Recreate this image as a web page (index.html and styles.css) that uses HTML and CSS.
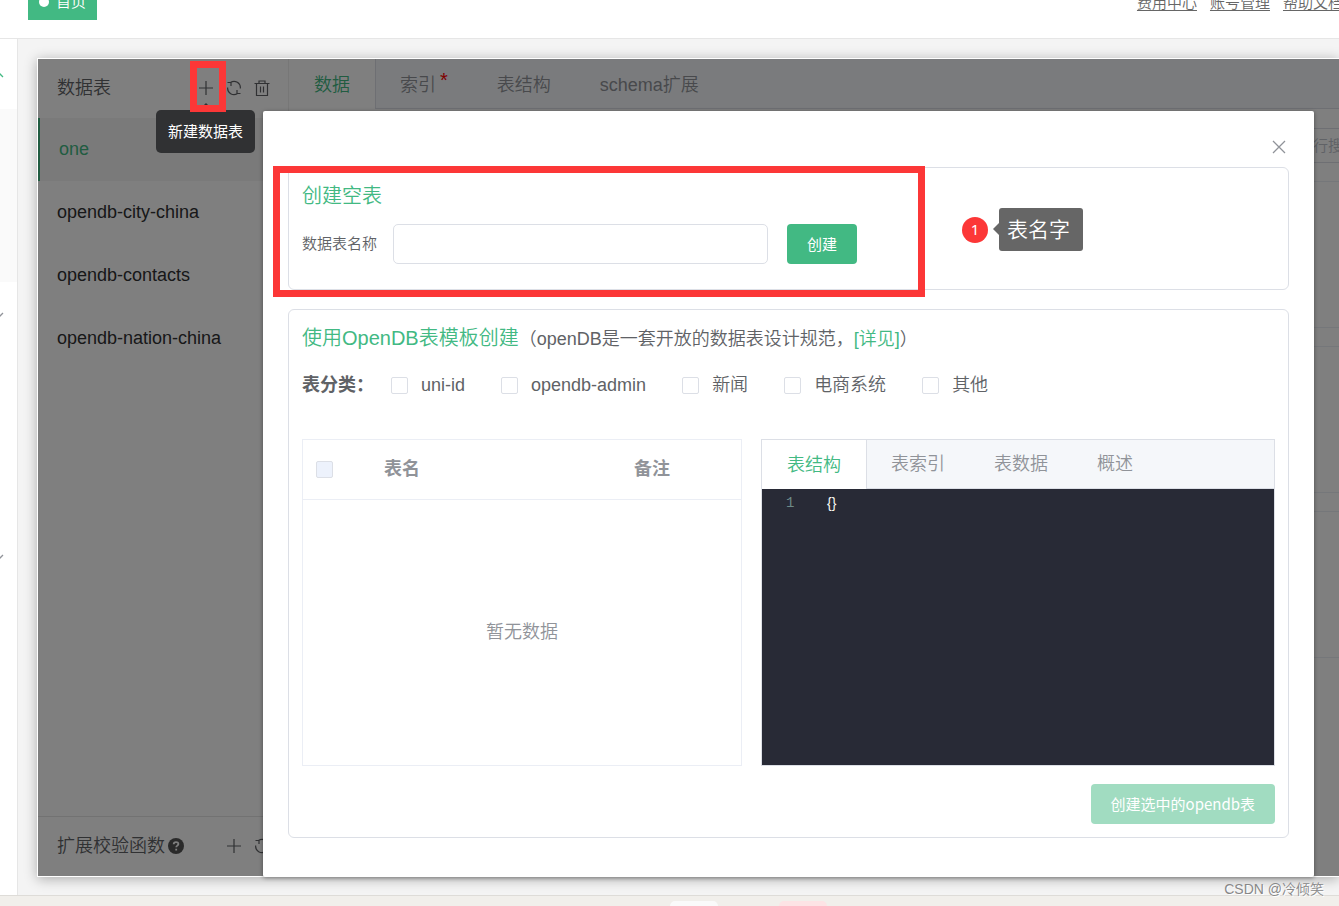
FILE: index.html
```html
<!DOCTYPE html>
<html lang="zh-CN">
<head>
<meta charset="utf-8">
<title>数据表</title>
<link rel="stylesheet" href="styles.css">
</head>
<body>
<svg class="sprite" aria-hidden="true">
  <symbol id="plus" viewBox="0 0 16 16"><path d="M8 1v14M1 8h14"/></symbol>
  <symbol id="refresh" viewBox="0 0 16 16"><path d="M4.500 2.500A6.300 6.300 0 0 1 14.300 8.500M11.500 13.500A6.300 6.300 0 0 1 1.700 7.500M1.500 2.500h3.500v3.500M14.500 13.500H11V10"/></symbol>
  <symbol id="trash" viewBox="0 0 16 16"><path d="M.5 3.500h15M5 3.500V1h6v2.500M2.500 3.500v12h11v-12M6.500 6.500v6M9.500 6.500v6"/></symbol>
</svg>

<header class="topbar">
  <a class="home-tab" href="#"><span class="dot"></span>首页</a>
  <nav class="top-links">
    <a href="#">费用中心</a><a href="#">账号管理</a><a href="#">帮助文档</a>
  </nav>
</header>

<div class="middle">
  <nav class="rail">
    <div class="rail-item rail-open"><svg class="chevron" viewBox="0 0 10 6"><path d="M1 5l4-4 4 4"/></svg></div>
    <div class="rail-sub"></div>
    <div class="rail-item"><svg class="chevron" viewBox="0 0 10 6"><path d="M1 1l4 4 4-4"/></svg></div>
    <div class="rail-sub rail-plain"></div>
    <div class="rail-item"><svg class="chevron" viewBox="0 0 10 6"><path d="M1 1l4 4 4-4"/></svg></div>
  </nav>

  <main class="stage">
    <div class="panel">
      <aside class="tables">
        <div class="tables-head">
          <span>数据表</span>
          <div class="tools">
            <button class="icon-btn" aria-label="新建数据表"><svg><use href="#plus"/></svg></button>
            <button class="icon-btn" aria-label="刷新"><svg><use href="#refresh"/></svg></button>
            <button class="icon-btn" aria-label="删除"><svg><use href="#trash"/></svg></button>
          </div>
        </div>
        <ul class="table-list">
          <li class="active">one</li>
          <li>opendb-city-china</li>
          <li>opendb-contacts</li>
          <li>opendb-nation-china</li>
        </ul>
        <div class="tables-foot">
          <span>扩展校验函数</span>
          <svg class="help" viewBox="0 0 16 16"><circle cx="8" cy="8" r="8"/><path d="M5.700 6.300c0-3 4.700-2.900 4.700-.2 0 1.500-2.200 1.600-2.200 3.200M8.200 10.800v1.600"/></svg>
          <div class="tools">
            <button class="icon-btn" aria-label="新建函数"><svg><use href="#plus"/></svg></button>
            <button class="icon-btn" aria-label="刷新函数"><svg><use href="#refresh"/></svg></button>
          </div>
        </div>
      </aside>
      <section class="records">
        <div class="tabs">
          <button class="tab tab-on">数据</button>
          <button class="tab">索引<sup>*</sup></button>
          <button class="tab">表结构</button>
          <button class="tab">schema扩展</button>
        </div>
        <div class="record-body">
          <input class="search" type="text" placeholder="行搜索" aria-label="搜索">
          <div class="record"></div>
          <div class="record"></div>
          <div class="record"></div>
        </div>
      </section>
      <div class="mask"></div>
    </div>
  </main>
</div>

<section class="dialog" role="dialog" aria-label="新建数据表">
  <div class="dialog-head">
    <button class="close" aria-label="关闭"><svg viewBox="0 0 12 12"><path d="M0 0l12 12M12 0L0 12"/></svg></button>
  </div>
  <form class="card">
    <h2>创建空表</h2>
    <div class="field">
      <label for="table-name">数据表名称</label>
      <input id="table-name" type="text">
      <button class="primary" type="button">创建</button>
    </div>
  </form>
  <div class="card card-template">
    <h2>使用OpenDB表模板创建<small>（openDB是一套开放的数据表设计规范，<a href="#">[详见]</a>）</small></h2>
    <div class="kinds">
      <strong>表分类：</strong>
      <label><input type="checkbox">uni-id</label>
      <label><input type="checkbox">opendb-admin</label>
      <label><input type="checkbox">新闻</label>
      <label><input type="checkbox">电商系统</label>
      <label><input type="checkbox">其他</label>
    </div>
    <div class="columns">
      <div class="grid">
        <table>
          <thead><tr><th class="col-check"><input type="checkbox" disabled aria-label="全选"></th><th class="col-name">表名</th><th>备注</th></tr></thead>
        </table>
        <p class="empty">暂无数据</p>
      </div>
      <div class="preview">
        <div class="tabs">
          <button class="tab tab-on">表结构</button>
          <button class="tab">表索引</button>
          <button class="tab">表数据</button>
          <button class="tab">概述</button>
        </div>
        <div class="editor"><span class="line-no">1</span><code>{}</code></div>
      </div>
    </div>
    <div class="actions"><button class="primary" type="button" disabled>创建选中的opendb表</button></div>
  </div>
</section>

<div class="tooltip" role="tooltip">新建数据表</div>
<div class="frame frame-plus"></div>
<div class="frame frame-form"></div>
<div class="callout"><span class="step">1</span><span class="note">表名字</span></div>

<footer class="taskbar"><span class="task"></span><span class="task task-pink"></span></footer>
<div class="watermark">CSDN @冷倾笑</div>
</body>
</html>
```

FILE: styles.css
```css
* { box-sizing: border-box; }

body {
  position: relative;
  display: flex;
  flex-direction: column;
  height: 100vh;
  margin: 0;
  overflow: hidden;
  background: #fff;
  color: #606266;
  font: 350 18px/24px "Liberation Sans", "Noto Sans CJK SC", sans-serif;
}

button, input { font: inherit; color: inherit; }
button { margin: 0; padding: 0; border: 0; background: none; }
h2, p, ul { margin: 0; padding: 0; list-style: none; }
.sprite { display: none; }

/* top bar */
.topbar {
  display: flex;
  flex: none;
  align-items: flex-start;
  justify-content: space-between;
  height: 39px;
  padding-left: 28px;
  border-bottom: 1px solid #e6e6e6;
  font-size: 15px;
}
.home-tab {
  display: flex;
  align-items: center;
  gap: 7px;
  height: 36px;
  margin-top: -16px;
  padding: 0 11px;
  background: #42b983;
  color: #fff;
  text-decoration: none;
}
.dot { width: 10px; height: 10px; border-radius: 50%; background: #fff; }
.top-links { display: flex; gap: 13px; margin: -9px -4px 0 0; }
.top-links a { color: #666; text-underline-offset: 2px; }

/* left rail */
.middle { display: flex; flex: 1; min-height: 0; }
.rail { flex: none; width: 18px; border-right: 1px solid #e6e6e6; overflow: hidden; }
.rail-item { display: flex; align-items: center; height: 66px; color: #909399; }
.rail-open { height: 72px; margin-bottom: -2px; color: #42b983; }
.rail-sub { height: 173px; background: #fafafa; }
.rail-plain { height: 176px; background: none; }
.chevron { width: 10px; height: 6px; margin-left: -6px; fill: none; stroke: currentColor; stroke-width: 1.300; }

/* main panel */
.stage { flex: 1; min-width: 0; padding: 19px 0 18px 19px; background: #f4f4f4; }
.panel {
  position: relative;
  display: flex;
  height: 100%;
  border: 1px solid #fff;
  border-right: 0;
  background: #fff;
  box-shadow: 0 2px 12px rgba(0, 0, 0, .3);
}
.mask { position: absolute; inset: 0; background: rgba(0, 0, 0, .5); }

.tables { display: flex; flex: none; flex-direction: column; width: 251px; border-right: 1px solid #eee; }
.tables-head, .tables-foot { display: flex; align-items: center; height: 59px; padding: 0 18px 2px 19px; }
.tables-foot { height: 60px; margin-top: auto; border-top: 1px solid #e4e4e4; }
.tools { display: flex; gap: 12px; margin-left: auto; }
.icon-btn { width: 16px; height: 16px; line-height: 0; }
.icon-btn svg { width: 16px; height: 16px; fill: none; stroke: #606266; stroke-width: 1.200; }
.help { width: 16px; height: 16px; margin-left: 3px; fill: #555; }
.help path { fill: none; stroke: #fff; stroke-width: 1.800; }
.table-list li { height: 63px; padding-left: 19px; color: #303133; line-height: 63px; }
.table-list .active { border-left: 2px solid #42b983; background: #f5f5f5; color: #42b983; }

.tabs { display: flex; height: 50px; border-bottom: 1px solid #dcdfe6; background: #f5f7fa; }
.tab { padding: 0 25px 0 24px; color: #909399; }
.tab-on { height: 50px; padding-left: 25px; border-right: 1px solid #dcdfe6; background: #fff; color: #42b983; }
.tab sup { padding-left: 4px; color: #f00; font-size: 20px; line-height: 0; vertical-align: 4px; }

.records { flex: 1; min-width: 0; overflow: hidden; }
.records .tab { padding-top: 2px; }
.record-body { display: flex; flex-direction: column; gap: 18px; padding-top: 19px; }
.search {
  height: 35px;
  margin-right: -60px;
  padding: 0 40px;
  border: 1px solid #dcdfe6;
  background: #fff;
  font-size: 15px;
  text-align: right;
}
.search::placeholder { color: #c0c4cc; }
.record { flex: none; height: 147px; border: 1px solid #ebeef5; border-width: 1px 0; }

/* dialog */
.dialog {
  position: absolute;
  top: 111px;
  right: 25px;
  bottom: 29px;
  left: 263px;
  display: flex;
  flex-direction: column;
  padding: 0 25px 39px;
  border-radius: 2px;
  background: #fff;
  box-shadow: 0 1px 4px rgba(0, 0, 0, .4);
}
.dialog-head { display: flex; flex: none; align-items: center; justify-content: flex-end; height: 56px; padding: 16px 4px 0; }
.close { width: 12px; height: 12px; line-height: 0; }
.close svg { width: 12px; height: 12px; overflow: visible; fill: none; stroke: #909399; stroke-width: 1.300; }
.card { height: 123px; padding: 14px 13px; border: 1px solid #dcdfe6; border-radius: 6px; }
.card-template { flex: 1; display: flex; flex-direction: column; margin-top: 19px; padding-bottom: 13px; }
h2 { color: #42b983; font-size: 20px; font-weight: 350; line-height: 28px; }
h2 small { color: #606266; font-size: 18px; }
h2 a { color: #42b983; text-decoration: none; }

.field { display: flex; align-items: center; margin-top: 14px; font-size: 15px; }
.field label { width: 91px; }
.field input { width: 375px; height: 40px; padding: 0 15px; border: 1px solid #dcdfe6; border-radius: 5px; }
.field .primary { margin-left: 19px; }
.primary { height: 40px; padding: 0 20px; border-radius: 4px; background: #42b983; color: #fff; font-family: "Noto Sans CJK SC", sans-serif; font-size: 15px; font-weight: 400; }
.primary:disabled { background: #a1dcc1; }

.kinds { display: flex; align-items: center; gap: 36px; margin-top: 20px; }
.kinds strong { margin-right: -19px; font-weight: 700; }
.kinds label { display: flex; align-items: center; gap: 13px; }
input[type="checkbox"] {
  appearance: none;
  display: block;
  width: 17px;
  height: 17px;
  margin: 0;
  border: 1px solid #dcdfe6;
  border-radius: 2px;
  background: #fff;
}
input[type="checkbox"]:disabled { background: #edf2fc; }

.columns { display: grid; flex: 1; grid-template-columns: 440fr 514fr; gap: 19px; margin-top: 42px; color: #909399; }
.grid { display: flex; flex-direction: column; border: 1px solid #ebeef5; }
.grid table { width: 100%; border-collapse: collapse; table-layout: fixed; }
.grid th { height: 59px; padding: 0; border-bottom: 1px solid #ebeef5; font-weight: 700; text-align: left; }
.grid .col-check { width: 81px; padding-left: 13px; }
.grid .col-name { width: 250px; }
.empty { margin: auto; }
.preview { display: flex; flex-direction: column; border: 1px solid #dcdfe6; }
.preview .tabs, .preview .tab-on { height: 49px; }
.editor { display: flex; flex: 1; padding: 4px 0 0 24px; background: #282a36; color: #f8f8f2; font-size: 14px; line-height: 20px; }
.line-no { width: 41px; color: #6d8a88; font-family: "Liberation Mono", monospace; }
.editor code { font-family: "Liberation Sans", sans-serif; }
.actions { display: flex; justify-content: flex-end; margin-top: 18px; }

/* overlays */
.tooltip {
  position: absolute;
  top: 110px;
  left: 156px;
  padding: 10px 12px 9px;
  border-radius: 5px;
  background: #303133;
  color: #fff;
  font-size: 15px;
  font-weight: 400;
}
.tooltip::before {
  content: "";
  position: absolute;
  top: -7px;
  left: 43px;
  border: solid transparent;
  border-width: 0 7px 7px;
  border-bottom-color: #303133;
}
.frame { position: absolute; border: 7px solid #fc3737; }
.frame-plus { top: 61px; left: 190px; width: 36px; height: 51px; }
.frame-form { top: 166px; left: 273px; width: 652px; height: 131px; }
.callout { position: absolute; top: 208px; left: 962px; display: flex; align-items: center; gap: 11px; color: #fff; }
.step { width: 26px; height: 26px; border-radius: 50%; background: #fc3737; font: 400 15px/24px "Noto Sans", sans-serif; text-align: center; }
.note { position: relative; padding: 0 13px 0 8px; border-radius: 3px; background: #666; font-size: 21px; line-height: 43px; }
.note::before {
  content: "";
  position: absolute;
  top: 15px;
  left: -6px;
  border: solid transparent;
  border-width: 6px 6px 6px 0;
  border-right-color: #666;
}

.taskbar { display: flex; flex: none; align-items: flex-end; gap: 61px; height: 11px; padding-left: 50%; border-top: 1px solid #dedcd8; background: #f1efeb; }
.task { width: 48px; height: 5px; border-radius: 5px 5px 0 0; background: #fafafa; }
.task-pink { background: #fde3e5; }
.watermark { position: absolute; right: 15px; bottom: 5px; color: #888; font-size: 14px; text-shadow: 1px 1px #fff; }
```
